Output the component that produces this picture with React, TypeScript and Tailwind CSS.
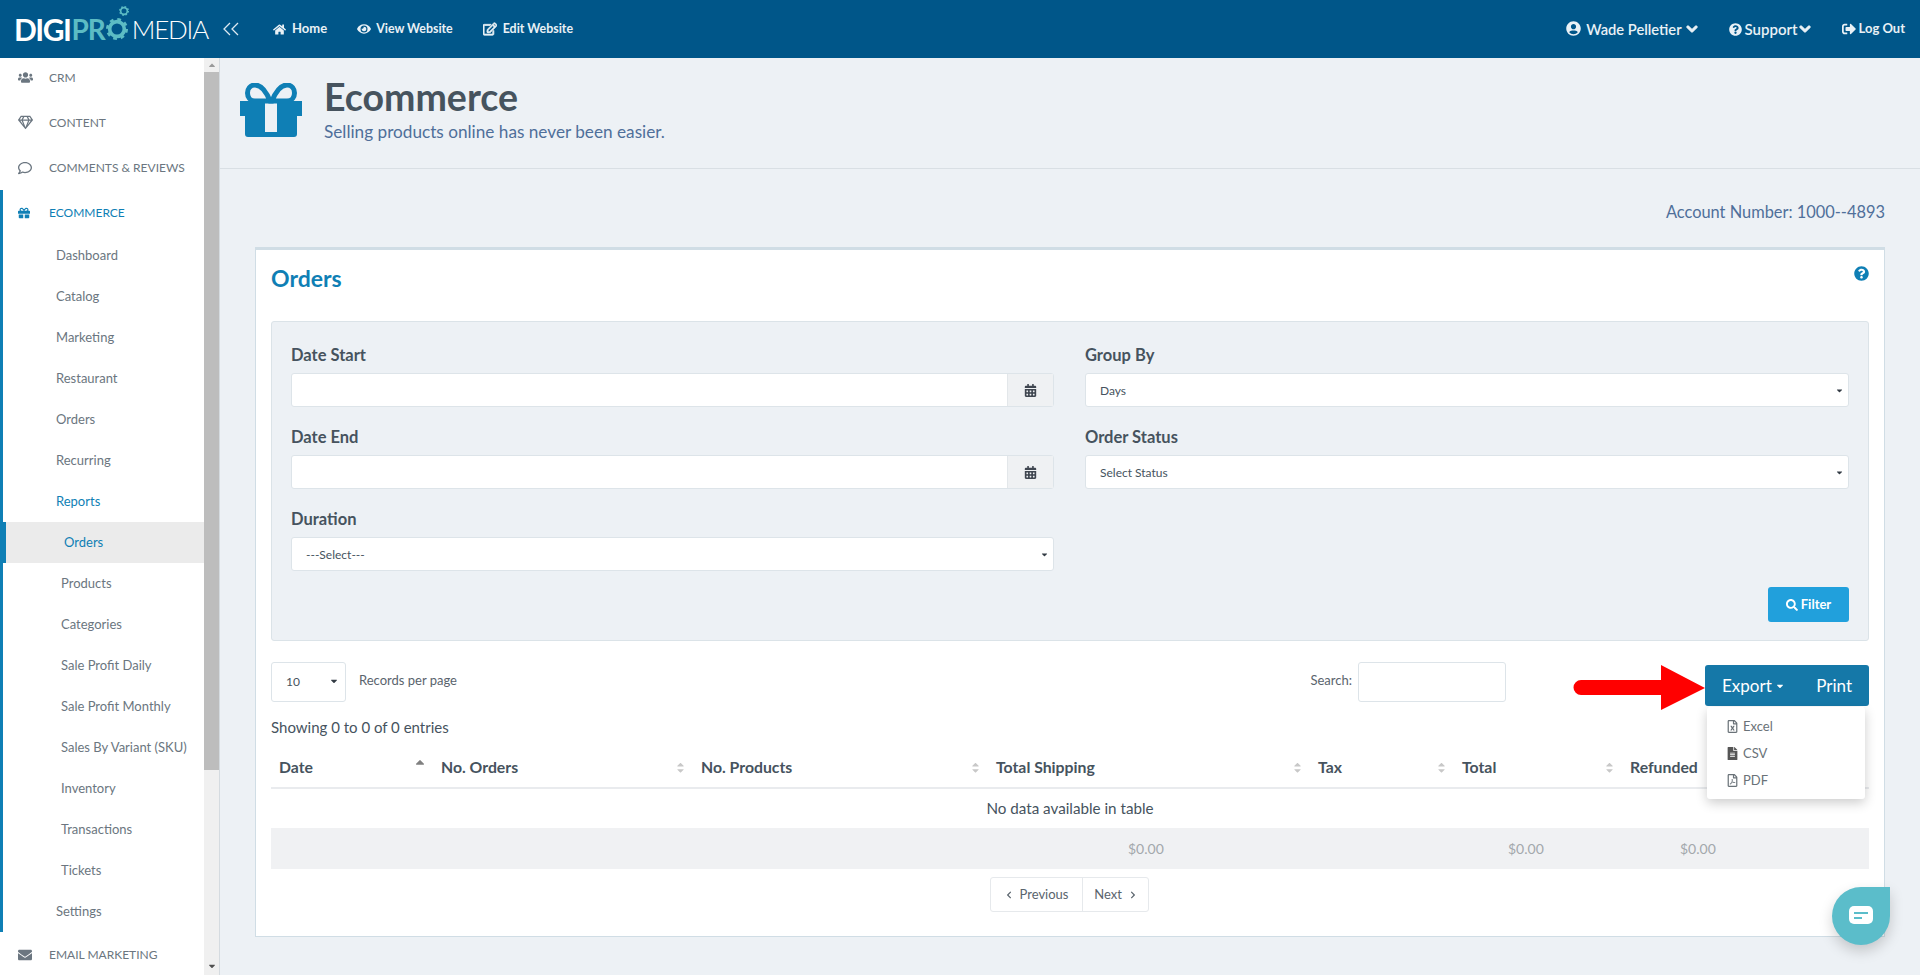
import React from "react";
import {
  FaHome, FaEye, FaRegEdit, FaUserCircle, FaChevronDown, FaQuestionCircle, FaSignOutAlt, FaUsers, FaRegGem,
  FaRegComment, FaGift, FaEnvelope, FaCalendarAlt, FaSearch, FaRegFileExcel, FaFileAlt, FaRegFilePdf,
  FaChevronLeft, FaChevronRight, FaCaretUp, FaCaretDown,
} from "react-icons/fa";

const subItems = [
  { t: "Dashboard", c: "pl-[53px] text-[#6b7680]" },
  { t: "Catalog", c: "pl-[53px] text-[#6b7680]" },
  { t: "Marketing", c: "pl-[53px] text-[#6b7680]" },
  { t: "Restaurant", c: "pl-[53px] text-[#6b7680]" },
  { t: "Orders", c: "pl-[53px] text-[#6b7680]" },
  { t: "Recurring", c: "pl-[53px] text-[#6b7680]" },
  { t: "Reports", c: "pl-[53px] text-[#0f7fb5]" },
  { t: "Orders", c: "pl-[58px] text-[#0f7fb5] bg-[#ebebeb] border-l-[3px] border-[#0f7fb5]" },
  { t: "Products", c: "pl-[58px] text-[#6b7680]" },
  { t: "Categories", c: "pl-[58px] text-[#6b7680]" },
  { t: "Sale Profit Daily", c: "pl-[58px] text-[#6b7680]" },
  { t: "Sale Profit Monthly", c: "pl-[58px] text-[#6b7680]" },
  { t: "Sales By Variant (SKU)", c: "pl-[58px] text-[#6b7680]" },
  { t: "Inventory", c: "pl-[58px] text-[#6b7680]" },
  { t: "Transactions", c: "pl-[58px] text-[#6b7680]" },
  { t: "Tickets", c: "pl-[58px] text-[#6b7680]" },
  { t: "Settings", c: "pl-[53px] text-[#6b7680]" },
];

function TopItem({ icon, label, active }: { icon: React.ReactNode; label: string; active?: boolean }) {
  return (
    <div className={`h-[45px] flex items-center shrink-0 text-[12px] ${active ? "text-[#0f7fb5] pl-[15px]" : "text-[#6b7680] pl-[18px]"}`}>
      <span className="w-[31px] flex items-center">{icon}</span>
      <span>{label}</span>
    </div>
  );
}

function Sidebar() {
  return (
    <aside className="w-[220px] shrink-0 flex bg-white border-r border-[#d5dbe0] overflow-hidden h-[917px]">
      <div className="w-[204px] shrink-0 -mt-[3px]">
        <TopItem icon={<FaUsers className="text-[15px]" />} label="CRM" />
        <TopItem icon={<FaRegGem className="text-[15px]" />} label="CONTENT" />
        <TopItem icon={<FaRegComment className="text-[14px]" />} label="COMMENTS & REVIEWS" />
        <div className="border-l-[3px] border-[#0f7fb5]">
          <TopItem active icon={<FaGift className="text-[12px]" />} label="ECOMMERCE" />
          {subItems.map((s, i) => (
            <div key={i} className={`h-[41px] flex items-center text-[13px] ${s.c}`}>
              {s.t}
            </div>
          ))}
        </div>
        <TopItem icon={<FaEnvelope className="text-[14px]" />} label="EMAIL MARKETING" />
      </div>
      <div className="w-[15px] bg-[#f0f0f0] flex flex-col items-center justify-between">
        <div className="w-full">
          <div className="h-[14px] flex items-center justify-center text-[#9a9a9a]"><FaCaretUp className="text-[10px]" /></div>
          <div className="w-full h-[698px] bg-[#bdbdbd]" />
        </div>
        <div className="h-[18px] flex items-center justify-center text-[#505050]"><FaCaretDown className="text-[10px]" /></div>
      </div>
    </aside>
  );
}

function Gear({ size, className }: { size: number; className?: string }) {
  return (
    <svg width={size} height={size} viewBox="0 0 24 24" className={className} fill="none">
      <circle cx="12" cy="12" r="8" stroke="#5cbcc4" strokeWidth="4" />
      <circle cx="12" cy="12" r="10.5" stroke="#5cbcc4" strokeWidth="3" strokeDasharray="4 4.25" />
    </svg>
  );
}

function Logo() {
  return (
    <div className="w-[218px] pl-[14px] flex items-center whitespace-nowrap leading-none">
      <span className="font-bold text-white text-[30px] tracking-[-1.5px]">DIGI</span>
      <span className="relative inline-flex items-center font-bold text-[#5cbcc4] text-[28px] tracking-[-1px] ml-[1px]">
        PR
        <Gear size={22} className="ml-[1px]" />
        <Gear size={10} className="absolute -top-[9px] -right-[1px]" />
      </span>
      <span className="text-white text-[26px] font-light tracking-[-1.2px] ml-[4px]">MEDIA</span>
    </div>
  );
}

function NavLink({ icon, label, className }: { icon: React.ReactNode; label: string; className?: string }) {
  return (
    <div className={`flex items-center font-bold text-[#e9f1f6] ${className ?? ""}`}>
      {icon}
      <span>{label}</span>
    </div>
  );
}

function Header() {
  return (
    <header className="h-[58px] bg-[#005689] flex items-center shrink-0">
      <Logo />
      <svg width="18" height="14" viewBox="0 0 18 14" fill="none" stroke="#dce9f1" strokeWidth="1.3" className="mr-[33px] -mt-[1px] ml-[4px]">
        <path d="M8 1 2 7l6 6M16 1l-6 6 6 6" />
      </svg>
      <NavLink icon={<FaHome className="text-[13px] mr-[6px]" />} label="Home" className="mr-[30px] text-[13px]" />
      <NavLink icon={<FaEye className="text-[14px] mr-[5px]" />} label="View Website" className="mr-[30px] text-[12.4px]" />
      <NavLink icon={<FaRegEdit className="text-[14px] mr-[6px] [stroke-width:30]" />} label="Edit Website" className="text-[12.4px]" />
      <div className="ml-auto flex items-center pr-[15px]">
        <div className="flex items-center text-[14.7px] font-semibold text-[#e9f1f6]">
          <FaUserCircle className="text-[15px] mr-[5px]" />
          <span>Wade Pelletier</span>
        </div>
        <FaChevronDown className="text-[12px] text-[#e9f1f6] ml-[4px] mr-[31px] [stroke-width:50]" />
        <div className="flex items-center text-[15px] font-semibold text-[#e9f1f6]">
          <FaQuestionCircle className="text-[13px] mr-[3px]" />
          <span>Support</span>
        </div>
        <FaChevronDown className="text-[12px] text-[#e9f1f6] ml-[1px] mr-[31px] [stroke-width:50]" />
        <NavLink icon={<FaSignOutAlt className="text-[14px] mr-[3px]" />} label="Log Out" className="text-[13px]" />
      </div>
    </header>
  );
}

function GiftIcon() {
  return (
    <svg width="62" height="54" viewBox="0 0 62 54" className="shrink-0" fill="#0f7fb5">
      <path d="M30 18C26 8 21 2 15 2c-5 0-7.500 4-7.500 8S10 18 15 18h15Z" fill="none" stroke="#0f7fb5" strokeWidth="5" />
      <path d="M32 18C36 8 41 2 47 2c5 0 7.500 4 7.500 8S52 18 47 18H32Z" fill="none" stroke="#0f7fb5" strokeWidth="5" />
      <path d="M0 18h25v15H0zM37 18h25v15H37zM5 33h20v21H8a3 3 0 0 1-3-3ZM37 33h20v18a3 3 0 0 1-3 3H37Z" />
      <path d="M25 49h12v5H25z" />
    </svg>
  );
}

function Field({ label, children }: { label: string; children: React.ReactNode }) {
  return (
    <div>
      <div className="h-[22px] leading-[22px] text-[16.5px] font-bold text-[#46535e] mb-[7px]">{label}</div>
      {children}
    </div>
  );
}

function DateInput() {
  return (
    <div className="h-[34px] flex bg-white border border-[#dde4e9] rounded-[3px]">
      <input className="flex-1 min-w-0 outline-none bg-transparent" />
      <div className="w-[46px] bg-[#eff1f3] border-l border-[#e3e7ea] flex items-center justify-center text-[#3f4650]">
        <FaCalendarAlt className="text-[13px]" />
      </div>
    </div>
  );
}

function Select({ text }: { text: string }) {
  return (
    <div className="h-[34px] flex items-center justify-between bg-white border border-[#dde4e9] rounded-[3px] pl-[14px] pr-[4px] text-[12px] text-[#46535e]">
      <span className="pt-[2px]">{text}</span>
      <FaCaretDown className="text-[9px] text-[#333b44]" />
    </div>
  );
}

function Sort({ dir }: { dir?: "up" }) {
  if (dir === "up") return <FaCaretUp className="absolute right-[6px] top-[9px] text-[14px] text-[#808080]" />;
  return (
    <span className="absolute right-[7px] top-[13px] flex flex-col text-[#c8c8c8] leading-none">
      <FaCaretUp className="text-[11px] -mb-[5px]" />
      <FaCaretDown className="text-[11px]" />
    </span>
  );
}

const cols = [
  { t: "Date", w: "w-[162px]", d: "up" as const },
  { t: "No. Orders", w: "w-[260px]" },
  { t: "No. Products", w: "w-[295px]" },
  { t: "Total Shipping", w: "w-[322px]" },
  { t: "Tax", w: "w-[144px]" },
  { t: "Total", w: "w-[168px]" },
  { t: "Refunded", w: "w-[138px]" },
  { t: "", w: "w-[109px]" },
];

function OrdersTable() {
  return (
    <table className="w-full table-fixed border-collapse text-[#46535e]">
      <colgroup>
        {cols.map((c, i) => <col key={i} className={c.w} />)}
      </colgroup>
      <thead>
        <tr className="h-[42px] border-b-2 border-[#e9ebee]">
          {cols.map((c, i) => (
            <th key={i} className="relative text-left font-bold text-[15.8px] pl-[8px] p-0">
              {c.t}
              {c.t && <Sort dir={c.d} />}
            </th>
          ))}
        </tr>
      </thead>
      <tbody>
        <tr className="h-[40px]">
          <td colSpan={8} className="text-center text-[15.2px]">No data available in table</td>
        </tr>
      </tbody>
      <tfoot>
        <tr className="h-[41px] bg-[#f0f1f3] text-[14px] text-[#a3a8ac]">
          <td colSpan={3} />
          <td className="pl-[140px]">$0.00</td>
          <td />
          <td className="pl-[54px]">$0.00</td>
          <td className="pl-[58px]">$0.00</td>
          <td />
        </tr>
      </tfoot>
    </table>
  );
}

function ExportGroup() {
  return (
    <div className="relative mt-[3px] ml-[199px] w-[164px] h-[41px] bg-[#1578a8] rounded-[3px] flex items-center text-white text-[17px]">
      <svg width="132" height="46" viewBox="0 0 132 46" className="absolute -left-[132px] top-0" fill="#ff0000">
        <path d="M88 0 132 23 88 45V30H8a7.500 7.500 0 0 1 0-15h80Z" />
      </svg>
      <span className="ml-[17px] flex items-center">Export<FaCaretDown className="text-[10px] ml-[3px]" /></span>
      <span className="ml-auto mr-[17px]">Print</span>
      <div className="absolute z-10 left-[2px] top-[42px] w-[158px] h-[92px] bg-white rounded-[3px] shadow-[0_4px_12px_rgba(0,0,0,0.2)] text-[#6a7278] text-[13px] pl-[19px] pt-[6px]">
        <div className="h-[27px] flex items-center"><FaRegFileExcel className="text-[13px] mr-[4px]" />Excel</div>
        <div className="h-[27px] flex items-center"><FaFileAlt className="text-[13px] mr-[4px] text-[#555]" />CSV</div>
        <div className="h-[27px] flex items-center"><FaRegFilePdf className="text-[13px] mr-[4px]" />PDF</div>
      </div>
    </div>
  );
}

function Card() {
  return (
    <section className="mx-[35px] bg-white border-x border-b border-t-[3px] border-[#d0dde5] px-[15px] pb-[24px]">
      <div className="h-[71px] flex justify-between pt-[14px]">
        <h2 className="text-[23px] font-bold text-[#0f7fb5] leading-[28px]">Orders</h2>
        <FaQuestionCircle className="text-[15px] text-[#0f7fb5] mt-[2px]" />
      </div>
      <div className="bg-[#edf1f5] border border-[#dbe3e8] rounded-[3px] px-[19px] pt-[22px] pb-[18px]">
        <div className="grid grid-cols-[763px_1fr] gap-x-[31px] gap-y-[19px]">
          <Field label="Date Start"><DateInput /></Field>
          <Field label="Group By"><Select text="Days" /></Field>
          <Field label="Date End"><DateInput /></Field>
          <Field label="Order Status"><Select text="Select Status" /></Field>
          <Field label="Duration"><Select text="---Select---" /></Field>
        </div>
        <div className="flex justify-end mt-[16px]">
          <button className="w-[81px] h-[35px] bg-[#21a0dc] rounded-[3px] text-white text-[13px] font-bold flex items-center justify-center">
            <FaSearch className="text-[12px] mr-[3px]" />Filter
          </button>
        </div>
      </div>
      <div className="flex items-start mt-[21px] text-[13px] text-[#5a646d]">
        <div className="w-[75px] h-[40px] border border-[#dde4e9] rounded-[3px] flex items-center justify-between pl-[14px] pr-[6px] text-[12px] text-[#46535e]">
          <span>10</span><FaCaretDown className="text-[10px] text-[#333b44] -mt-[2px]" />
        </div>
        <span className="ml-[13px] mt-[9px]">Records per page</span>
        <span className="ml-auto mt-[9px]">Search:</span>
        <input className="ml-[6px] w-[148px] h-[40px] border border-[#dde4e9] rounded-[3px] outline-none" />
        <ExportGroup />
      </div>
      <div className="h-[42px] flex items-center text-[15px] text-[#46535e]">Showing 0 to 0 of 0 entries</div>
      <div className="-mt-[2px]"><OrdersTable /></div>
      <div className="flex mt-[8px] ml-[719px]">
        <div className="w-[159px] h-[35px] flex border border-[#e6e9ec] rounded-[3px] text-[13px] text-[#5a646d]">
          <span className="w-[92px] flex items-center justify-center border-r border-[#e6e9ec]"><FaChevronLeft className="text-[8px] mr-[7px]" />Previous</span>
          <span className="flex-1 flex items-center justify-center">Next<FaChevronRight className="text-[8px] ml-[7px]" /></span>
        </div>
      </div>
    </section>
  );
}

export default function App() {
  return (
    <div className="relative h-[975px] overflow-hidden bg-[#edf1f5] font-['Lato',sans-serif]">
      <Header />
      <div className="flex">
        <Sidebar />
        <main className="flex-1 min-w-0">
          <div className="h-[111px] border-b border-[#d9dfe4] flex pl-[20px] pt-[25px]">
            <GiftIcon />
            <div className="ml-[22px]">
              <h1 className="text-[37.5px] leading-[28px] font-bold text-[#46535e]">Ecommerce</h1>
              <p className="text-[17.2px] leading-[24px] mt-[9px] text-[#4f6f9a]">Selling products online has never been easier.</p>
            </div>
          </div>
          <div className="h-[78px] flex items-center justify-end pr-[35px] pt-[8px] text-[16.4px] text-[#4f6f9a]">Account Number: 1000--4893</div>
          <Card />
        </main>
      </div>
      <div className="absolute left-[1832px] top-[887px] w-[58px] h-[58px] rounded-full rounded-tr-[6px] bg-[#5bbdca] shadow-[0_6px_14px_rgba(0,0,0,0.18)] flex items-center justify-center">
        <svg width="24" height="20" viewBox="0 0 24 20">
          <rect width="24" height="18" rx="5" fill="#fff" />
          <path d="M5 7h14" stroke="#5bbdca" strokeWidth="2" />
          <path d="M5 12h8" stroke="#5bbdca" strokeWidth="2" />
        </svg>
      </div>
    </div>
  );
}
